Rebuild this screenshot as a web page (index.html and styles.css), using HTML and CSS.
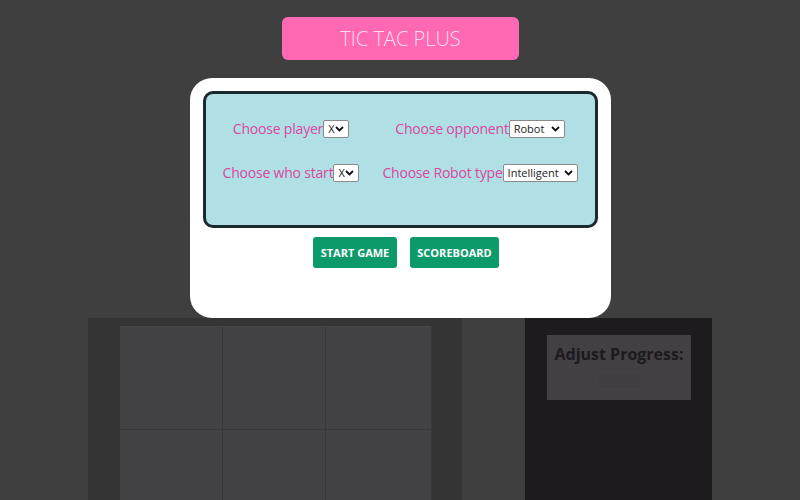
FILE: index.html
```html
<!DOCTYPE html>
<html>
<head>
<meta charset="utf-8">
<link rel="stylesheet" href="styles.css">
</head>
<body>
<div class="page">
  <div class="title">TIC TAC PLUS</div>
  <div class="modal">
    <div class="settings">
      <div class="group"><span class="label">Choose player</span><select class="sel sel-x"><option>X</option><option>O</option></select></div>
      <div class="group"><span class="label">Choose opponent</span><select class="sel sel-opp"><option>Robot</option><option>Human</option></select></div>
      <div class="group"><span class="label">Choose who start</span><select class="sel sel-x"><option>X</option><option>O</option></select></div>
      <div class="group"><span class="label">Choose Robot type</span><select class="sel sel-type"><option>Intelligent</option><option>Random</option></select></div>
    </div>
    <div class="actions">
      <button class="btn btn-start">START GAME</button>
      <button class="btn btn-score">SCOREBOARD</button>
    </div>
  </div>
  <div class="game">
    <div class="board-wrap">
      <div class="board">
        <div class="cell"></div><div class="cell"></div><div class="cell"></div>
        <div class="cell"></div><div class="cell"></div><div class="cell"></div>
      </div>
    </div>
    <div class="side">
      <div class="progress">
        <div class="progress-title">Adjust Progress:</div>
        <div class="progress-btn"></div>
      </div>
    </div>
  </div>
</div>
</body>
</html>
```
FILE: styles.css
```css
html, body {
  margin: 0;
  padding: 0;
  height: 100%;
  overflow: hidden;
}
body {
  background: #3f3f3f;
  font-family: "Open Sans", "Noto Sans", sans-serif;
}
.page {
  display: flex;
  flex-direction: column;
  align-items: center;
  padding-top: 17px;
  height: 100%;
  box-sizing: border-box;
  overflow: hidden;
}
.title {
  width: 237px;
  height: 43px;
  flex: none;
  box-sizing: border-box;
  background: #ff69b4;
  border-radius: 6px;
  color: #ffdcef;
  font-weight: 300;
  font-size: 20px;
  display: flex;
  align-items: center;
  justify-content: center;
  margin-left: 1px;
}
.modal {
  margin-top: 18px;
  width: 421px;
  height: 240px;
  flex: none;
  box-sizing: border-box;
  background: #ffffff;
  border-radius: 22px;
  padding: 13px;
  margin-left: 1px;
}
.settings {
  height: 137px;
  box-sizing: border-box;
  background: #b0e0e6;
  border: 3px solid #1b2a2f;
  border-radius: 10px;
  display: grid;
  grid-template-columns: 170px 198px;
  grid-auto-rows: 20px;
  column-gap: 5px;
  row-gap: 24px;
  padding-top: 25px;
}
.group {
  display: flex;
  align-items: center;
  justify-content: center;
  white-space: nowrap;
}
.label {
  color: #d9479f;
  font-size: 14px;
  line-height: 20px;
  letter-spacing: -0.2px;
}
.sel {
  appearance: none;
  -webkit-appearance: none;
  font-family: "Open Sans", sans-serif;
  font-size: 11px;
  height: 18px;
  line-height: 16px;
  padding: 0 0 0 4px;
  margin: 0;
  background-color: #fff;
  background-image: url("data:image/svg+xml;utf8,<svg xmlns='http://www.w3.org/2000/svg' width='9' height='6' viewBox='0 0 9 6'><path d='M1 1 L4.5 4.5 L8 1' fill='none' stroke='%23111' stroke-width='1.8'/></svg>");
  background-repeat: no-repeat;
  background-position: right 4px center;
  color: #222;
  border: 1px solid #8a8a8a;
  border-radius: 2px;
  box-sizing: border-box;
}
.sel-x { width: 26px; }
.sel-opp { width: 56px; }
.sel-type { width: 75px; }
.actions {
  display: flex;
  justify-content: center;
  gap: 13px;
  margin-top: 9px;
  padding-left: 11px;
}
.btn {
  height: 31px;
  border: none;
  border-radius: 3px;
  background: #0c9a6b;
  color: #fff;
  font-family: "Open Sans", sans-serif;
  font-weight: 700;
  font-size: 11px;
  padding: 0;
  margin: 0;
  white-space: nowrap;
}
.btn-start { width: 84px; }
.btn-score { width: 89px; }
.game {
  display: flex;
  gap: 63px;
  width: 624px;
  flex: 1;
  min-height: 0;
  overflow: hidden;
}
.board-wrap {
  width: 374px;
  background: #343434;
  padding: 8px 30px 0 32px;
  box-sizing: border-box;
  overflow: hidden;
}
.board {
  display: grid;
  grid-template-columns: 103px 103px 105px;
  grid-auto-rows: 103px;
  background: #424144;
  border-top: 1px solid #464548;
  border-right: 1px solid #38373a;
}
.cell {
  border-right: 1px solid #38373a;
  border-bottom: 1px solid #38373a;
}
.cell:nth-child(3n) { border-right: none; }
.side {
  width: 187px;
  background: #1e1b1f;
  padding: 17px 21px 0 22px;
  box-sizing: border-box;
}
.progress {
  height: 65px;
  background: #433f44;
  display: flex;
  flex-direction: column;
  align-items: center;
  padding-top: 8px;
  box-sizing: border-box;
}
.progress-title {
  color: #1d1a1e;
  font-weight: 700;
  font-size: 16px;
  line-height: 22px;
}
.progress-btn {
  margin-top: 7px;
  width: 44px;
  height: 16px;
  border: 1px solid #464248;
  border-radius: 3px;
  background: #423e43;
}
```
